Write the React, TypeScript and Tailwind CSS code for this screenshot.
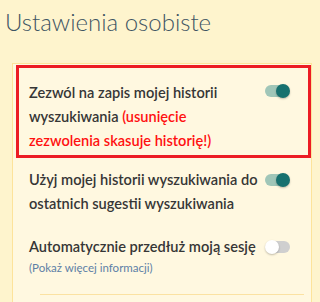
function Toggle({ on }: { on: boolean }) {
  return (
    <div className="relative w-[25px] h-[14px] shrink-0">
      <div
        className={
          on
            ? 'absolute left-0 right-[2px] top-[1px] h-[12px] rounded-full bg-[#a0c6b8]'
            : 'absolute left-[2px] right-0 top-[1px] h-[12px] rounded-full bg-[#cfcfcf]'
        }
      />
      <div
        className={
          on
            ? 'absolute right-0 top-0 w-[14px] h-[14px] rounded-full bg-[#17716f] shadow-[0_1px_2px_rgba(0,0,0,0.25)]'
            : 'absolute left-0 top-0 w-[14px] h-[14px] rounded-full bg-white shadow-[0_1px_2px_rgba(0,0,0,0.25)]'
        }
      />
    </div>
  );
}

export default function App() {
  return (
    <div className="w-[320px] h-[302px] overflow-hidden bg-[#fef4cd] font-['Lato','Liberation_Sans',sans-serif]">
      <h2 className="pl-[5px] pt-[7px] text-[24px] leading-[30px] font-light text-[#3e5463]">
        Ustawienia osobiste
      </h2>

      <div className="ml-[12px] w-[300px] mt-[26px] border border-[#fde39b] bg-[#fff8e0] pl-[3px] pt-[1px] pb-[10px]">
        <div className="border-[3px] border-[#ec1c24] pl-[10px] pr-[18px] pt-[13px] pb-[2px] flex items-start">
          <p className="flex-1 text-[14.6px] leading-[24px] font-semibold text-[#363636]">
            Zezwól na zapis mojej historii wyszukiwania{' '}
            <span className="text-[#ff1010]">(usunięcie zezwolenia skasuje historię!)</span>
          </p>
          <div className="mt-[3px] ml-[8px]">
            <Toggle on />
          </div>
        </div>

        <div className="pl-[13px] pr-[21px] mt-[10px] flex items-start">
          <p className="flex-1 -mr-[8px] text-[14.6px] leading-[24px] font-semibold text-[#363636]">
            Użyj mojej historii wyszukiwania do ostatnich sugestii wyszukiwania
          </p>
          <div className="mt-[5px] ml-[9px]">
            <Toggle on />
          </div>
        </div>

        <div className="pl-[13px] pr-[21px] mt-[19px] flex items-start">
          <p className="flex-1 -mr-[8px] text-[14.6px] leading-[24px] font-semibold text-[#363636]">
            Automatycznie przedłuż moją sesję
          </p>
          <div className="mt-[5px] ml-[9px]">
            <Toggle on={false} />
          </div>
        </div>

        <p className="pl-[13px] text-[11.5px] leading-[18px] text-[#5d80a6]">(Pokaż więcej informacji)</p>

        <div className="ml-[24px] mr-[7px] mt-[17px] h-px bg-[#fbe2a2]" />
      </div>
    </div>
  );
}
